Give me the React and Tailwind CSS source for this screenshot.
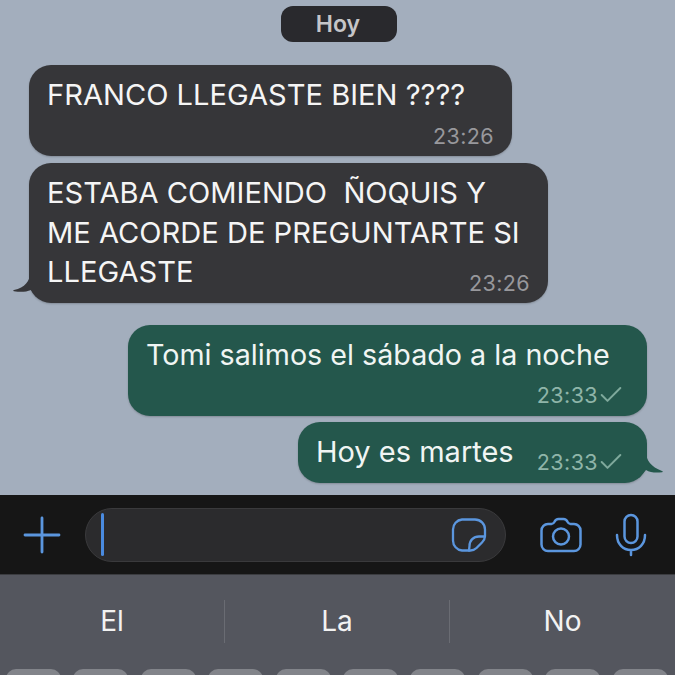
import { Check } from "lucide-react";

function TailLeft() {
  return (
    <svg className="absolute left-[-16px] bottom-[5px]" width="30" height="24" viewBox="0 0 30 24">
      <path d="M17 0c0 6-5 14-16 16-1 .3-1 1 0 1.300 7 1 12 .7 17-1.300l6 6h6V0z" fill="#363639" />
    </svg>
  );
}

function TailRight() {
  return (
    <svg className="absolute right-[-16px] bottom-[5px]" width="30" height="26" viewBox="0 0 30 26">
      <path d="M13 0c0 8 5 15 16 19 1 .4 1 1 0 1.200-6 .8-12 .3-16-2.200l-7 8H0V0z" fill="#24574c" />
    </svg>
  );
}

function Time({ value, sent }) {
  return (
    <div className={`flex shrink-0 items-center text-[21.5px] leading-[26px] tracking-[0.4px] ${sent ? "text-[#8fb5a9]" : "text-[#98989c]"}`}>
      <span>{value}</span>
      {sent && <Check size={28} strokeWidth={1.700} className="mx-[-1px] text-[#7fa99c]" />}
    </div>
  );
}

function StickerIcon() {
  return (
    <svg width="36" height="36" viewBox="0 0 36 36" fill="none" stroke="#5b96de" strokeWidth="2.300" strokeLinecap="round" strokeLinejoin="round">
      <path d="M11 2.500h13a10 10 0 0 1 10 10v6.500c0 2.500-1 4.500-3 6.500l-5.500 5.500c-2 2-4 2.500-6 2.500H11A10 10 0 0 1 2 23.500v-11A10 10 0 0 1 11 2.500z" />
      <path d="M34 19.500h-6c-5.500 0-9.500 4-9.500 9.500l-.5 4.500" />
    </svg>
  );
}

function CameraIcon() {
  return (
    <svg width="42" height="36" viewBox="0 0 42 36" fill="none" stroke="#5b96de" strokeWidth="2.500" strokeLinejoin="round">
      <path d="M8 7h3.500c1.500 0 2.300-.8 3-2.200C15.300 3 16.500 2 18.500 2h5c2 0 3.200 1 4 2.800.7 1.400 1.500 2.200 3 2.200H34a6.500 6.500 0 0 1 6.500 6.500v14A6.500 6.500 0 0 1 34 34H8a6.500 6.500 0 0 1-6.500-6.500v-14A6.500 6.500 0 0 1 8 7z" />
      <circle cx="21" cy="19.500" r="8" />
    </svg>
  );
}

function MicIcon() {
  return (
    <svg width="32" height="44" viewBox="0 0 32 44" fill="none" stroke="#5b96de" strokeWidth="2.500" strokeLinecap="round">
      <rect x="9.500" y="2" width="13" height="28" rx="6.500" />
      <path d="M2 22c0 9 6 15 14 15s14-6 14-15M16 37v5" />
    </svg>
  );
}

function PlusIcon() {
  return (
    <svg width="38" height="38" viewBox="0 0 38 38" fill="none" stroke="#5b96de" strokeWidth="2.800" strokeLinecap="round">
      <path d="M19 2v34M2 19h34" />
    </svg>
  );
}

export default function App() {
  return (
    <div className="flex h-[675px] w-[675px] flex-col overflow-hidden bg-[#a3aebd] font-['Inter',sans-serif] text-white">
      <div className="flex h-[495px] shrink-0 flex-col pl-[29px] pr-[28px] pt-[6px]">
        <div className="ml-[252px] flex h-[36px] w-[116px] items-center justify-center rounded-[12px] bg-[#29292d] pr-[2px] text-[23px] font-semibold text-[#c5c5c8]">
          Hoy
        </div>

        <div className="mt-[23px] flex h-[91px] w-[483px] flex-col justify-between rounded-[22px] bg-[#363639] pb-[7px] pl-[18px] pr-[18px] pt-[11px] shadow-[0_1px_2px_rgba(0,0,0,0.2)]">
          <div className="whitespace-nowrap text-[29.100px] leading-[38px] text-[#f5f5f5]">FRANCO LLEGASTE BIEN ????</div>
          <div className="self-end"><Time value="23:26" /></div>
        </div>

        <div className="relative mt-[7px] h-[140px] w-[519px] rounded-[22px] bg-[#363639] pb-[7px] pl-[18px] pr-[18px] pt-[10px] shadow-[0_1px_2px_rgba(0,0,0,0.2)]">
          <TailLeft />
          <div className="relative whitespace-pre text-[29.100px] leading-[39.500px] text-[#f5f5f5]">
            ESTABA COMIENDO  ÑOQUIS Y{"\n"}ME ACORDE DE PREGUNTARTE SI
          </div>
          <div className="relative flex items-start justify-between">
            <div className="text-[29.100px] leading-[39.500px] text-[#f5f5f5]">LLEGASTE</div>
            <div className="mt-[18px]"><Time value="23:26" /></div>
          </div>
        </div>

        <div className="mt-[22px] flex h-[91px] w-[519px] flex-col justify-between self-end rounded-[22px] bg-[#24574c] pb-[7px] pl-[18px] pr-[23px] pt-[11px] shadow-[0_1px_2px_rgba(0,0,0,0.2)]">
          <div className="whitespace-nowrap text-[28.700px] leading-[38px] text-[#f0f5f3]">Tomi salimos el sábado a la noche</div>
          <div className="self-end"><Time value="23:33" sent /></div>
        </div>

        <div className="relative mt-[6px] flex h-[61px] w-[349px] items-start justify-between self-end rounded-[22px] bg-[#24574c] pl-[18px] pr-[23px] pt-[11px] shadow-[0_1px_2px_rgba(0,0,0,0.2)]">
          <TailRight />
          <div className="relative whitespace-nowrap text-[29px] leading-[38px] text-[#f0f5f3]">Hoy es martes</div>
          <div className="relative mt-[15px]"><Time value="23:33" sent /></div>
        </div>
      </div>

      <div className="flex h-[80px] shrink-0 items-center border-b border-[#3b3c40] bg-[#161616]">
        <div className="ml-[23px] shrink-0"><PlusIcon /></div>
        <div className="ml-[24px] flex h-[54px] w-[421px] shrink-0 items-center justify-between rounded-[27px] border border-[#3a3a3c] bg-[#2b2b2d] pl-[15px] pr-[18px]">
          <div className="h-[43px] w-[3px] rounded-full bg-[#4a8be0]" />
          <StickerIcon />
        </div>
        <div className="ml-[34px] shrink-0"><CameraIcon /></div>
        <div className="ml-[33px] shrink-0"><MicIcon /></div>
      </div>

      <div className="flex flex-1 flex-col bg-[#54565e]">
        <div className="flex h-[94px] shrink-0 items-center pb-[2px]">
          <div className="flex h-[43px] w-[225px] items-center justify-center border-r border-[#6a6c73] text-[28px] text-[#f2f2f2]">El</div>
          <div className="flex h-[43px] w-[225px] items-center justify-center border-r border-[#6a6c73] text-[28px] text-[#f2f2f2]">La</div>
          <div className="flex h-[43px] flex-1 items-center justify-center text-[28px] text-[#f2f2f2]">No</div>
        </div>
        <div className="flex gap-[12.400px] pl-[6px]">
          {Array.from({ length: 10 }).map((_, i) => (
            <div key={i} className="h-[20px] w-[55px] shrink-0 rounded-t-[10px] bg-[#82848a]" />
          ))}
        </div>
      </div>
    </div>
  );
}
